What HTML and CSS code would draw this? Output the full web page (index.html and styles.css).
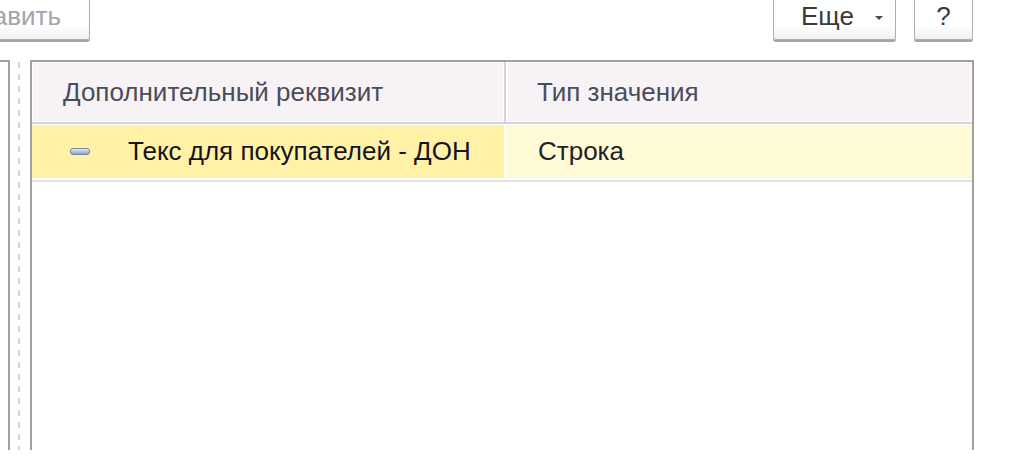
FILE: index.html
```html
<!DOCTYPE html>
<html lang="ru">
<head>
<meta charset="utf-8">
<title>Дополнительные реквизиты</title>
<link rel="stylesheet" href="styles.css">
</head>
<body>
<div class="page">
  <div class="toolbar">
    <button class="btn btn-add" disabled>Добавить</button>
    <div class="spacer"></div>
    <button class="btn btn-more">Еще <span class="caret"></span></button>
    <button class="btn btn-help">?</button>
  </div>
  <div class="main">
    <div class="left-panel"></div>
    <div class="splitter"><div class="dashes"></div></div>
    <div class="table">
      <div class="thead">
        <div class="th">Дополнительный реквизит</div>
        <div class="th-divider"></div>
        <div class="th">Тип значения</div>
      </div>
      <div class="row selected">
        <div class="td td-current"><span class="minus-icon"></span><span class="cell-text">Текс для покупателей - ДОН</span></div>
        <div class="td-divider"></div>
        <div class="td">Строка</div>
      </div>
    </div>
  </div>
</div>
</body>
</html>
```

FILE: styles.css
```css
html, body {
  margin: 0;
  padding: 0;
  background: #ffffff;
  overflow: hidden;
}

.page {
  width: 1010px;
  height: 458px;
  font-family: "Liberation Sans", Arial, sans-serif;
  font-size: 26px;
}

.toolbar {
  display: flex;
  align-items: flex-start;
  height: 50px;
  margin-top: -8px;
  padding-right: 37px;
}

.spacer {
  flex: 1;
}

.btn {
  font-family: "Liberation Sans", Arial, sans-serif;
  font-size: 26px;
  height: 48px;
  box-sizing: border-box;
  padding: 0;
  border: 1px solid #aeaeae;
  border-radius: 3px;
  background: linear-gradient(to bottom, #ffffff 0, #ffffff 70%, #f1eff3 100%);
  box-shadow: 0 2px 0 #a4a4a4;
  color: #3a3a3a;
  display: flex;
  align-items: center;
  justify-content: center;
}

.btn-add {
  width: 140px;
  margin-left: -50px;
  justify-content: flex-end;
  padding-right: 28px;
  color: #a3a3ad;
}

.btn-more {
  width: 123px;
  margin-right: 18px;
  justify-content: flex-start;
  padding-left: 27px;
}

.caret {
  width: 0;
  height: 0;
  border-left: 4px solid transparent;
  border-right: 4px solid transparent;
  border-top: 4px solid #4a4a4a;
  margin-left: 21px;
  margin-top: 3px;
}

.btn-help {
  width: 59px;
}

.main {
  display: flex;
  margin-top: 18px;
  height: 400px;
}

.left-panel {
  width: 8px;
  border-top: 2px solid #a0a0a0;
  border-right: 2px solid #a0a0a0;
}

.splitter {
  width: 20px;
  display: flex;
  justify-content: flex-start;
  padding-left: 8px;
  box-sizing: border-box;
  padding-top: 2px;
}

.dashes {
  width: 2px;
  height: 100%;
  background: repeating-linear-gradient(to bottom, #d4d4d4 0, #d4d4d4 6px, transparent 6px, transparent 12px);
}

.table {
  width: 944px;
  box-sizing: border-box;
  border: 2px solid #a0a0a0;
  border-bottom: none;
  background: #ffffff;
}

.thead {
  display: grid;
  grid-template-columns: 472px 2px 1fr;
  height: 60px;
  border-bottom: 2px solid #d4d4d4;
}

.th {
  background: #f6f2f6;
  box-shadow: inset 0 0 0 1px #ffffff;
  color: #4c4c58;
  display: flex;
  align-items: center;
  padding-left: 31px;
}

.th-divider {
  background: #d4d4d4;
}

.row {
  display: grid;
  grid-template-columns: 472px 2px 1fr;
  height: 53px;
  padding: 1px 0 2px 0;
  border-bottom: 2px solid #e2e2e2;
  background: #ffffff;
}

.td {
  background: #fffad6;
  display: flex;
  align-items: center;
  padding-left: 32px;
  color: #222226;
}

.td-current {
  background: #fff2a6;
  padding-left: 38px;
  color: #14141c;
}

.td-divider {
  background: #ffffff;
}

.minus-icon {
  width: 20px;
  height: 7px;
  box-sizing: border-box;
  border: 1px solid #71879e;
  border-radius: 3px;
  background: linear-gradient(to bottom, #e4ecf5 0, #b4c6da 50%, #8ea6c0 100%);
  margin-right: 38px;
}
```
